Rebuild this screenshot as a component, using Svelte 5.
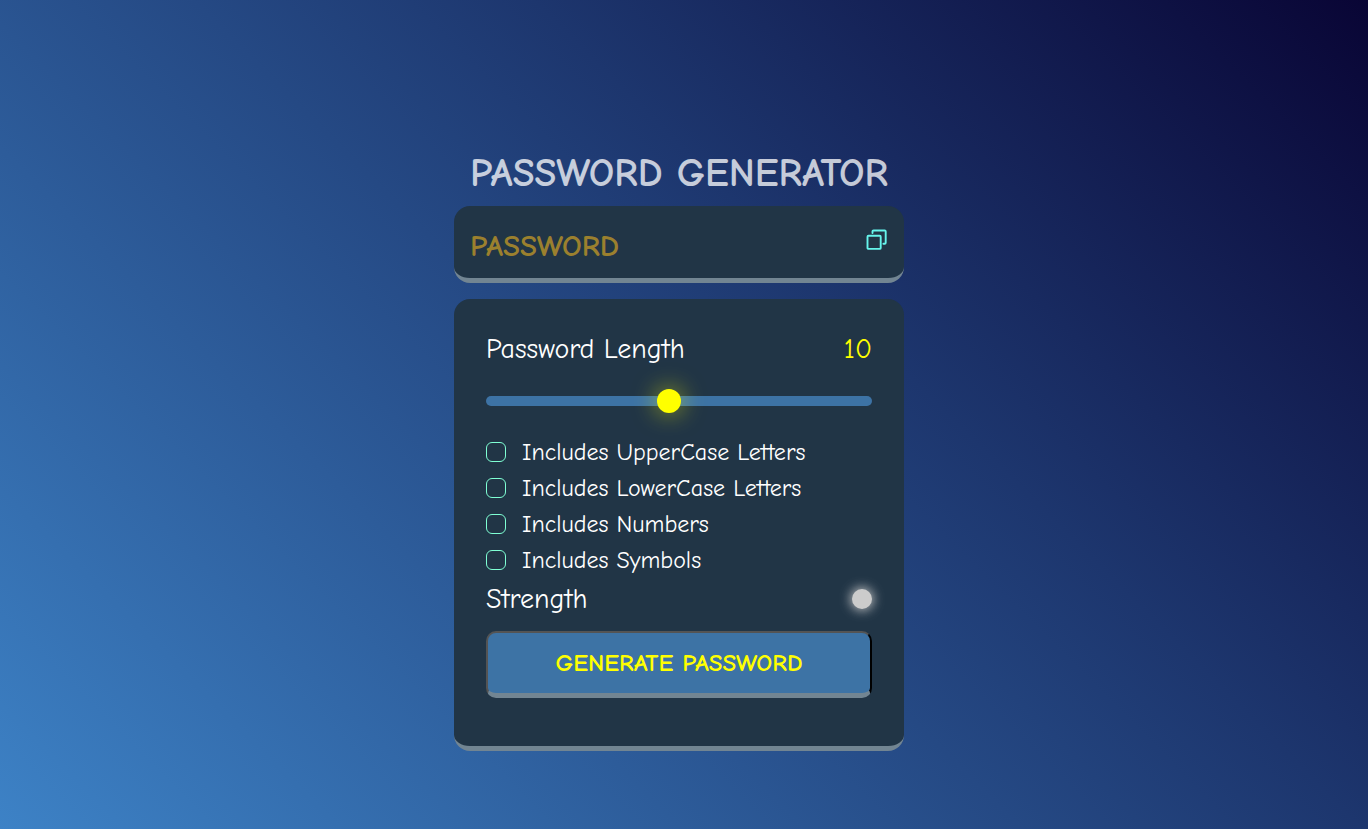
<script>
  let length = $state(10);
  let password = $state('');
  let options = $state([
    { id: 'upper', label: 'Includes UpperCase Letters', chars: 'ABCDEFGHIJKLMNOPQRSTUVWXYZ', checked: false },
    { id: 'lower', label: 'Includes LowerCase Letters', chars: 'abcdefghijklmnopqrstuvwxyz', checked: false },
    { id: 'numbers', label: 'Includes Numbers', chars: '0123456789', checked: false },
    { id: 'symbols', label: 'Includes Symbols', chars: '!@#$%^&*()_+-=[]{};:,.<>?', checked: false }
  ]);

  function generate() {
    const pool = options.filter((o) => o.checked).map((o) => o.chars).join('');
    if (!pool) return;
    let next = '';
    for (let i = 0; i < length; i++) next += pool[Math.floor(Math.random() * pool.length)];
    password = next;
  }

  function copy() {
    navigator.clipboard?.writeText(password);
  }
</script>

<main>
  <div class="container">
    <h1>PASSWORD GENERATOR</h1>

    <div class="display">
      <input class="password" type="text" readonly placeholder="PASSWORD" aria-label="Password" value={password} />
      <button class="copy" type="button" aria-label="Copy password" onclick={copy}>
        <svg viewBox="0 0 22 22" width="22" height="22" fill="none" stroke="currentColor" stroke-width="1.9" stroke-linejoin="round" stroke-linecap="round">
          <rect x="1.500" y="6.700" width="13.200" height="13.200" rx="1" />
          <path d="M6.500 4V2.500a1 1 0 0 1 1-1h11.200a1 1 0 0 1 1 1v11.300a1 1 0 0 1-1 1h-1.300" />
        </svg>
      </button>
    </div>

    <div class="panel">
      <div class="row">
        <label for="length">Password Length</label>
        <output class="count" for="length">{length}</output>
      </div>
      <input id="length" class="slider" type="range" min="1" max="20" bind:value={length} />

      <div class="options">
        {#each options as option (option.id)}
          <div class="option">
            <input id={option.id} type="checkbox" bind:checked={option.checked} />
            <label for={option.id}>{option.label}</label>
          </div>
        {/each}
      </div>

      <div class="row strength">
        <span>Strength</span>
        <span class="indicator"></span>
      </div>

      <button class="generate" type="button" onclick={generate}>GENERATE PASSWORD</button>
    </div>
  </div>
</main>

<style>
  :global(body) {
    margin: 0;
  }

  main {
    min-height: 100vh;
    box-sizing: border-box;
    display: flex;
    align-items: center;
    justify-content: center;
    padding: 69px 10px 0 0;
    background: linear-gradient(45deg, #3d82c6, #1d366e 62%, #090535);
    font-family: "Comic Sans MS", "Comic Neue", Lato, sans-serif;
    font-variant-ligatures: none;
    color: #fff;
  }

  .container {
    width: 100%;
    max-width: 450px;
  }

  h1 {
    margin: 0 0 8px;
    font-size: 40px;
    line-height: 50px;
    font-weight: 700;
    text-align: center;
    color: #fff;
    opacity: 0.75;
    white-space: nowrap;
  }

  .display,
  .panel {
    box-sizing: border-box;
    background: #213546;
    border-bottom: 5px solid #728592;
    border-radius: 16px;
  }

  .display {
    display: flex;
    align-items: flex-start;
    height: 77px;
    padding: 16px;
    margin-bottom: 16px;
  }

  .password {
    flex: 1;
    min-width: 0;
    height: 48px;
    box-sizing: border-box;
    padding: 0;
    border: 0;
    outline: 0;
    background: transparent;
    color: #ffff00;
    font: 700 31px/48px "Comic Sans MS", "Comic Neue", Lato, sans-serif;
  }

  .password::placeholder {
    color: #9b802e;
    opacity: 1;
  }

  .copy {
    display: flex;
    padding: 0;
    margin-top: 7px;
    border: 0;
    background: none;
    color: #66f5ec;
    cursor: pointer;
  }

  .panel {
    padding: 32px 32px 48px;
  }

  .row {
    display: flex;
    align-items: center;
    justify-content: space-between;
    font-size: 28px;
    line-height: 36px;
  }

  .count {
    color: #ffff00;
  }

  .slider {
    appearance: none;
    display: block;
    width: 100%;
    height: 10px;
    margin: 29px 0 28px;
    border-radius: 8px;
    background: #3d73a5;
    cursor: pointer;
  }

  .slider::-webkit-slider-thumb {
    appearance: none;
    width: 24px;
    height: 24px;
    border-radius: 50%;
    background: #ffff00;
    box-shadow: 0 0 24px 0 rgba(255, 255, 0, 0.6);
  }

  .options {
    display: flex;
    flex-direction: column;
  }

  .option {
    display: flex;
    align-items: center;
    gap: 16px;
    height: 36px;
    font-size: 24px;
  }

  .option input {
    appearance: none;
    box-sizing: border-box;
    width: 20px;
    height: 20px;
    margin: 0;
    border: 1px solid #7fffd4;
    border-radius: 6px;
    cursor: pointer;
  }

  .option input:checked {
    background: #7fffd4;
  }

  .strength {
    height: 42px;
  }

  .indicator {
    width: 20px;
    height: 20px;
    border-radius: 50%;
    background: #ccc;
    box-shadow: 0 0 12px 1px #ccc;
  }

  .generate {
    display: block;
    width: 100%;
    height: 67px;
    box-sizing: border-box;
    margin-top: 11px;
    border: 2px outset #000;
    border-bottom: 5px solid #728592;
    border-radius: 10px;
    background: #3d73a5;
    color: #ffff00;
    font: 700 25px/32px "Comic Sans MS", "Comic Neue", Lato, sans-serif;
    cursor: pointer;
  }
</style>
